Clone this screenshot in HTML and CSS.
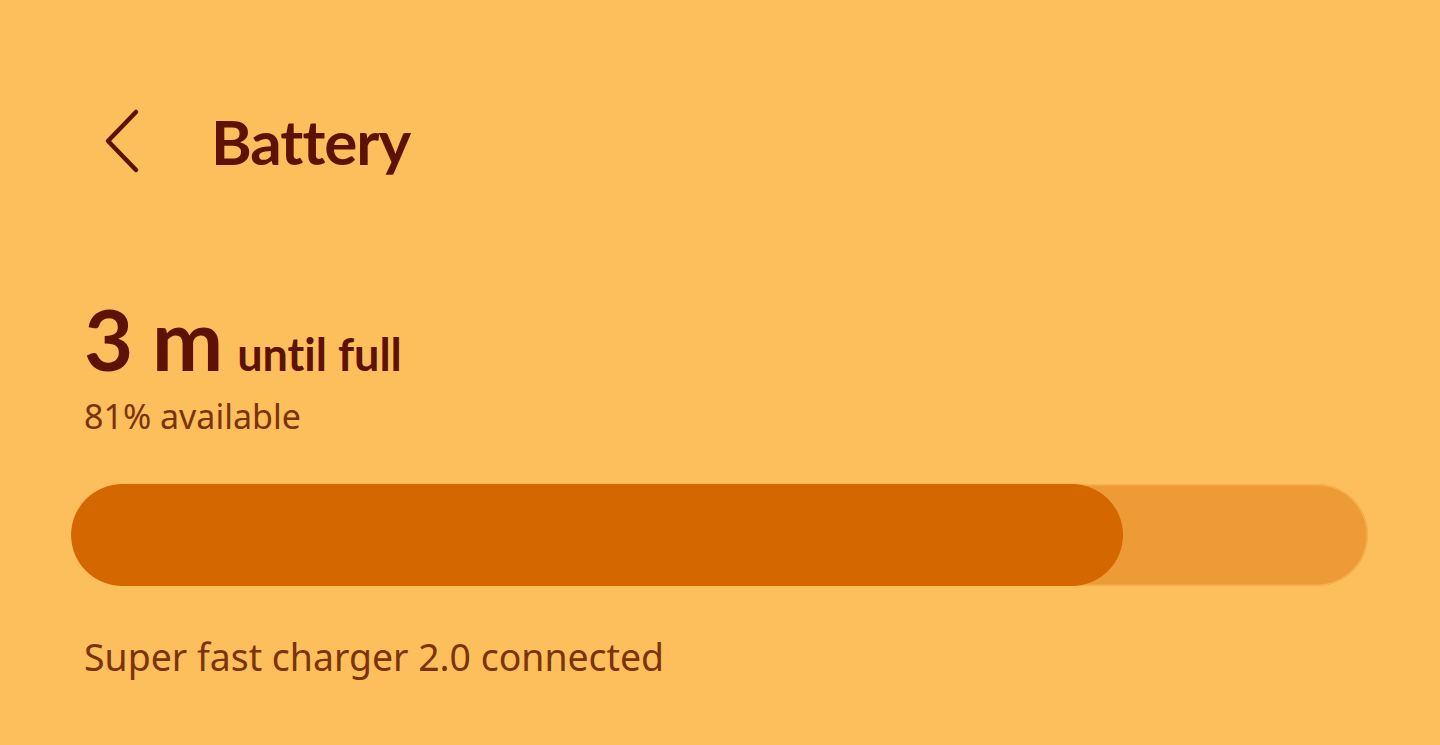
FILE: index.html
```html
<!DOCTYPE html>
<html>
<head>
<meta charset="utf-8">
<link rel="stylesheet" href="styles.css">
</head>
<body>
<div class="page">
  <header class="header">
    <svg class="back" width="40" height="66" viewBox="0 0 40 66">
      <polyline points="33,4 5,33 33,62" fill="none" stroke="#5e1206" stroke-width="4.5" stroke-linecap="round" stroke-linejoin="round"/>
    </svg>
    <h1 class="title">Battery</h1>
  </header>
  <section class="status">
    <div class="time"><span class="big">3 m</span><span class="until">until full</span></div>
    <div class="avail">81% available</div>
  </section>
  <div class="track"><div class="fill" style="width:81.1%"></div></div>
  <div class="charger">Super fast charger 2.0 connected</div>
</div>
</body>
</html>
```
FILE: styles.css
```css
html, body {
  margin: 0;
  padding: 0;
  background: #fdbf5b;
}
body {
  font-family: "Noto Sans", "Open Sans", sans-serif;
  width: 1440px;
  height: 745px;
  overflow: hidden;
  font-variant-ligatures: none;
}
.page {
  padding: 0 72px 0 71px;
}
.header {
  display: flex;
  align-items: flex-start;
  height: 296px;
  padding-left: 32px;
  box-sizing: border-box;
  padding-top: 106px;
}
.back {
  display: block;
  margin-top: 2px;
}
.title {
  margin: 0 0 0 68px;
  font-family: "Lato", "Noto Sans", sans-serif;
  font-size: 62px;
  font-weight: 700;
  color: #5e1206;
  line-height: 70px;
  letter-spacing: -1px;
}
.status {
  padding-left: 13px;
}
.time {
  color: #5e1206;
  line-height: 1;
  display: flex;
  align-items: baseline;
}
.big {
  font-family: "Lato", "Noto Sans", sans-serif;
  font-size: 85px;
  font-weight: 700;
  word-spacing: -2px;
}
.until {
  font-family: "Lato", "Noto Sans", sans-serif;
  font-size: 45px;
  font-weight: 700;
  margin-left: 14px;
}
.avail {
  font-size: 34px;
  color: #7a330a;
  margin-top: 12px;
}
.track {
  margin-top: 45px;
  height: 102px;
  border-radius: 51px;
  background: #ec9b36;
  box-shadow: inset 0 0 0 1.5px #f6b04e;
  overflow: hidden;
}
.fill {
  height: 100%;
  background: #d46700;
  border-radius: 51px;
}
.charger {
  padding-left: 13px;
  margin-top: 45px;
  font-size: 37.4px;
  color: #7a330a;
}
```
